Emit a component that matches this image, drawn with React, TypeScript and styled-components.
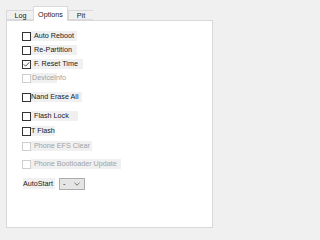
import React from "react";
import styled, { createGlobalStyle } from "styled-components";

const Global = createGlobalStyle`
  html, body { margin: 0; padding: 0; background: #f0f0f0; }
  body { font-family: "Liberation Sans", Arial, sans-serif; }
`;

const Frame = styled.div`
  width: 218px;
  height: 231px;
  box-sizing: border-box;
  padding: 6px 5px 3px 6px;
  display: flex;
  flex-direction: column;
  background: #f0f0f0;
`;

const TabStrip = styled.div`
  display: flex;
  align-items: flex-end;
  height: 14px;
  position: relative;
  z-index: 1;
`;

const Tab = styled.div<{ $active?: boolean; $w: number }>`
  box-sizing: border-box;
  width: ${(p) => p.$w}px;
  height: ${(p) => (p.$active ? 15 : 10)}px;
  margin-bottom: ${(p) => (p.$active ? -1 : 0)}px;
  margin-left: ${(p) => (p.$active ? -1 : 0)}px;
  background: ${(p) => (p.$active ? "#ffffff" : "#f0f0f0")};
  border: 1px solid #d9d9d9;
  border-bottom: ${(p) => (p.$active ? "none" : "1px solid #d9d9d9")};
  border-right: ${(p) => (p.$active ? "1px solid #d9d9d9" : "none")};
  font-size: 7.2px;
  color: #1a1a1a;
  display: flex;
  justify-content: center;
  align-items: ${(p) => (p.$active ? "flex-start" : "center")};
  padding-top: ${(p) => (p.$active ? 3 : 0)}px;
  line-height: 9px;
`;

const Panel = styled.div`
  flex: 1;
  box-sizing: border-box;
  background: #ffffff;
  border: 1px solid #d9d9d9;
  padding: 10px 0 0 15px;
  display: flex;
  flex-direction: column;
`;

const Row = styled.div<{ $mt: number }>`
  display: flex;
  align-items: center;
  height: 10px;
  margin-top: ${(p) => p.$mt}px;
`;

const Box = styled.div<{ $disabled?: boolean }>`
  box-sizing: border-box;
  width: 9px;
  height: 9px;
  border: 1px solid ${(p) => (p.$disabled ? "#cfcfcf" : "#333333")};
  background: #ffffff;
  display: flex;
  align-items: center;
  justify-content: center;
`;

const Label = styled.div<{ $w: number; $pl: number; $disabled?: boolean }>`
  box-sizing: border-box;
  width: ${(p) => p.$w}px;
  height: 10px;
  padding-left: ${(p) => p.$pl}px;
  background: #f0f0f0;
  font-size: 7.2px;
  line-height: 10px;
  white-space: nowrap;
  color: ${(p) => (p.$disabled ? "#a3a3a3" : "#1a1a1a")};
`;

const StartRow = styled.div`
  display: flex;
  align-items: center;
  height: 13px;
  margin-top: 8px;
`;

const StartLabel = styled.div`
  margin-left: 1px;
  width: 32px;
  height: 11px;
  background: #f0f0f0;
  font-size: 7.2px;
  line-height: 11px;
  color: #1a1a1a;
  white-space: nowrap;
`;

const Select = styled.div`
  box-sizing: border-box;
  margin-left: 4px;
  width: 26px;
  height: 12px;
  border: 1px solid #adadad;
  background: #e5e5e5;
  display: flex;
  align-items: center;
  justify-content: space-between;
  padding: 0 4px 0 3px;
  font-size: 7.2px;
  color: #1a1a1a;
`;

type Item = {
  label: string;
  mt: number;
  w: number;
  pl: number;
  checked?: boolean;
  disabled?: boolean;
};

const items: Item[] = [
  { label: "Auto Reboot", mt: 0, w: 46, pl: 3 },
  { label: "Re-Partition", mt: 4, w: 46, pl: 3 },
  { label: "F. Reset Time", mt: 4, w: 52, pl: 3, checked: true },
  { label: "DeviceInfo", mt: 4, w: 26, pl: 1, disabled: true },
  { label: "Nand Erase All", mt: 9, w: 51, pl: 0 },
  { label: "Flash Lock", mt: 9, w: 47, pl: 3 },
  { label: "T Flash", mt: 5, w: 24, pl: 0 },
  { label: "Phone EFS Clear", mt: 5, w: 61, pl: 3, disabled: true },
  { label: "Phone Bootloader Update", mt: 8, w: 90, pl: 3, disabled: true },
];

export default function App() {
  return (
    <>
      <Global />
      <Frame>
        <TabStrip>
          <Tab $w={28}>Log</Tab>
          <Tab $w={35} $active>
            Options
          </Tab>
          <Tab $w={25}>Pit</Tab>
        </TabStrip>
        <Panel>
          {items.map((it) => (
            <Row key={it.label} $mt={it.mt}>
              <Box $disabled={it.disabled}>
                {it.checked && (
                  <svg width="7" height="7" viewBox="0 0 7 7">
                    <polyline
                      points="0.8,3.4 2.6,5.2 6.2,1.4"
                      fill="none"
                      stroke="#333"
                      strokeWidth="0.9"
                    />
                  </svg>
                )}
              </Box>
              <Label $w={it.w} $pl={it.pl} $disabled={it.disabled}>
                {it.label}
              </Label>
            </Row>
          ))}
          <StartRow>
            <StartLabel>AutoStart</StartLabel>
            <Select>
              <span>-</span>
              <svg width="6" height="4" viewBox="0 0 6 4">
                <polyline
                  points="0.5,0.8 3,3.2 5.5,0.8"
                  fill="none"
                  stroke="#555"
                  strokeWidth="0.8"
                />
              </svg>
            </Select>
          </StartRow>
        </Panel>
      </Frame>
    </>
  );
}
